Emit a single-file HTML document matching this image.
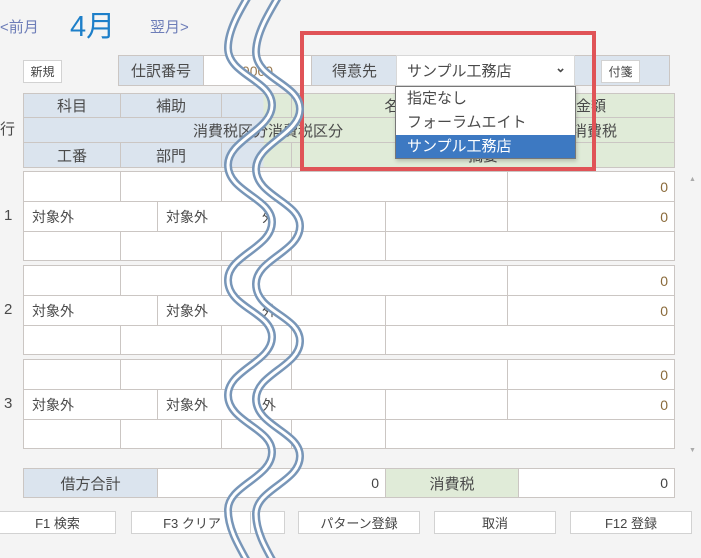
<!DOCTYPE html>
<html><head><meta charset="utf-8"><style>
*{margin:0;padding:0;box-sizing:border-box}
body{width:701px;height:558px;background:#f4f4f4;position:relative;overflow:hidden;font-family:"Liberation Sans","Noto Sans CJK JP",sans-serif;font-size:14px;color:#4a4a4a}
.a{position:absolute}
.c{position:absolute;border:1px solid #cbc6c3;background:#fff;display:flex;align-items:center;justify-content:center;white-space:nowrap}
.b{background:#dbe4ee}
.g{background:#e0ebd8}
.l{justify-content:flex-start;padding-left:8px}
.r{justify-content:flex-end;padding-right:6px;color:#8a6a3a}
.btn{position:absolute;border:1px solid #d2d2d2;background:#fff;display:flex;align-items:center;justify-content:center;font-size:13px;color:#444}
</style></head><body>
<div class="a" style="left:0;top:16px;color:#6d7db8;font-size:15px">&lt;前月</div>
<div class="a" style="left:70px;top:3px;color:#1d7fc9;font-size:29px">4月</div>
<div class="a" style="left:150px;top:16px;color:#6d7db8;font-size:15px">翌月&gt;</div>

<div class="btn" style="left:23px;top:60px;width:39px;height:23px;font-size:12px">新規</div>
<div class="c b" style="left:118px;top:55px;width:86px;height:31px;font-size:15px">仕訳番号</div>
<div class="c" style="left:203px;top:55px;width:109px;height:31px;color:#9a7a50">0000</div>
<div class="c b" style="left:311px;top:55px;width:359px;height:31px;justify-content:flex-start;padding-left:20px;font-size:15px">得意先</div>
<div class="c" style="left:396px;top:55px;width:179px;height:31px;justify-content:flex-start;padding-left:10px;font-size:15px;border-color:#d8d8d8">サンプル工務店<span class="a" style="right:8px;top:4px;font-size:13px;font-weight:bold">⌄</span></div>
<div class="btn" style="left:601px;top:60px;width:39px;height:23px;font-size:12px">付箋</div>

<div class="a" style="left:0;top:118px;font-size:15px">行</div>
<div class="c b" style="left:23px;top:93px;width:98px;height:25px;font-size:15px">科目</div>
<div class="c b" style="left:120px;top:93px;width:102px;height:25px;font-size:15px">補助</div>
<div class="c b" style="left:221px;top:93px;width:71px;height:25px;background:linear-gradient(90deg,#dbe4ee 60%,#e0ebd8 60%)"></div>
<div class="c g" style="left:291px;top:93px;width:217px;height:25px;font-size:15px">名称</div>
<div class="c g" style="left:507px;top:93px;width:168px;height:25px;font-size:15px">金額</div>
<div class="c b" style="left:23px;top:117px;width:652px;height:26px;background:linear-gradient(90deg,#dbe4ee 240px,#e0ebd8 240px)"></div>
<div class="a" style="left:193px;top:120px;font-size:15px">消費税区分消費税区分</div>
<div class="a" style="left:572px;top:120px;font-size:15px">消費税</div>
<div class="c b" style="left:23px;top:142px;width:98px;height:26px;font-size:15px">工番</div>
<div class="c b" style="left:120px;top:142px;width:102px;height:26px;font-size:15px">部門</div>
<div class="c b" style="left:221px;top:142px;width:71px;height:26px;background:linear-gradient(90deg,#dbe4ee 60%,#e0ebd8 60%)"></div>
<div class="c g" style="left:291px;top:142px;width:384px;height:26px;font-size:15px">摘要</div>

<div id="groups"></div>
<script>
var h='';[171,265,359].forEach(function(t,i){
h+='<div class="a" style="left:4px;top:'+(t+36)+'px;font-size:15px">'+(i+1)+'</div>';
h+='<div class="c" style="left:23px;top:'+t+'px;width:98px;height:31px"></div>';
h+='<div class="c" style="left:120px;top:'+t+'px;width:102px;height:31px"></div>';
h+='<div class="c" style="left:221px;top:'+t+'px;width:71px;height:31px"></div>';
h+='<div class="c" style="left:291px;top:'+t+'px;width:217px;height:31px"></div>';
h+='<div class="c r" style="left:507px;top:'+t+'px;width:168px;height:31px">0</div>';
h+='<div class="c l" style="left:23px;top:'+(t+30)+'px;width:135px;height:31px">対象外</div>';
h+='<div class="c l" style="left:157px;top:'+(t+30)+'px;width:135px;height:31px">対象外</div>';
h+='<div class="c l" style="left:254px;top:'+(t+30)+'px;width:132px;height:31px;border-left:none">外</div>';
h+='<div class="c" style="left:385px;top:'+(t+30)+'px;width:123px;height:31px"></div>';
h+='<div class="c r" style="left:507px;top:'+(t+30)+'px;width:168px;height:31px">0</div>';
h+='<div class="c" style="left:23px;top:'+(t+60)+'px;width:98px;height:30px"></div>';
h+='<div class="c" style="left:120px;top:'+(t+60)+'px;width:102px;height:30px"></div>';
h+='<div class="c" style="left:221px;top:'+(t+60)+'px;width:71px;height:30px"></div>';
h+='<div class="c" style="left:291px;top:'+(t+60)+'px;width:95px;height:30px"></div>';
h+='<div class="c" style="left:385px;top:'+(t+60)+'px;width:290px;height:30px"></div>';
});document.getElementById('groups').innerHTML=h;
</script>
<div class="a" style="left:689px;top:176px;font-size:7px;color:#aaa">▲</div>
<div class="a" style="left:689px;top:447px;font-size:7px;color:#aaa">▼</div>

<div class="c b" style="left:23px;top:468px;width:135px;height:30px;font-size:15px">借方合計</div>
<div class="c r" style="left:157px;top:468px;width:229px;height:30px;color:#444">0</div>
<div class="c g" style="left:385px;top:468px;width:134px;height:30px;font-size:15px">消費税</div>
<div class="c r" style="left:518px;top:468px;width:157px;height:30px;color:#444">0</div>

<div class="btn" style="left:-1px;top:511px;width:117px;height:23px">F1 検索</div>
<div class="btn" style="left:131px;top:511px;width:122px;height:23px">F3 クリア</div>
<div class="btn" style="left:250px;top:511px;width:35px;height:23px"></div>
<div class="btn" style="left:298px;top:511px;width:122px;height:23px">パターン登録</div>
<div class="btn" style="left:434px;top:511px;width:122px;height:23px">取消</div>
<div class="btn" style="left:570px;top:511px;width:122px;height:23px">F12 登録</div>

<div class="a" style="left:395px;top:86px;width:181px;height:73px;background:#fff;border:1px solid #777;box-shadow:1px 2px 4px rgba(0,0,0,.2);font-size:15px">
<div style="height:24px;padding-left:11px;line-height:23px">指定なし</div>
<div style="height:24px;padding-left:11px;line-height:23px">フォーラムエイト</div>
<div style="height:23px;padding-left:11px;line-height:23px;background:#3d79c2;color:#fff">サンプル工務店</div>
</div>
<div class="a" style="left:300px;top:31px;width:296px;height:140px;border:4px solid #e05357"></div>

<svg class="a" style="left:0;top:0" width="701" height="558">
<defs>
<path id="w" d="M252,-10 C240,10 228,30 228,48 C228,75 272,80 272,105 C272,130 228,140 228,165 C228,192 272,198 272,222 C272,248 228,255 228,280 C228,308 272,312 272,337 C272,362 228,370 228,395 C228,422 272,428 272,452 C272,478 228,485 228,510 C228,530 240,548 252,570"/>
</defs>
<g fill="none">
<use href="#w" stroke="#7896b8" stroke-width="8"/>
<use href="#w" stroke="#fff" stroke-width="3"/>
<use href="#w" x="28" y="4" stroke="#7896b8" stroke-width="8"/>
<use href="#w" x="28" y="4" stroke="#fff" stroke-width="3"/>
</g>
</svg>
</body></html>
